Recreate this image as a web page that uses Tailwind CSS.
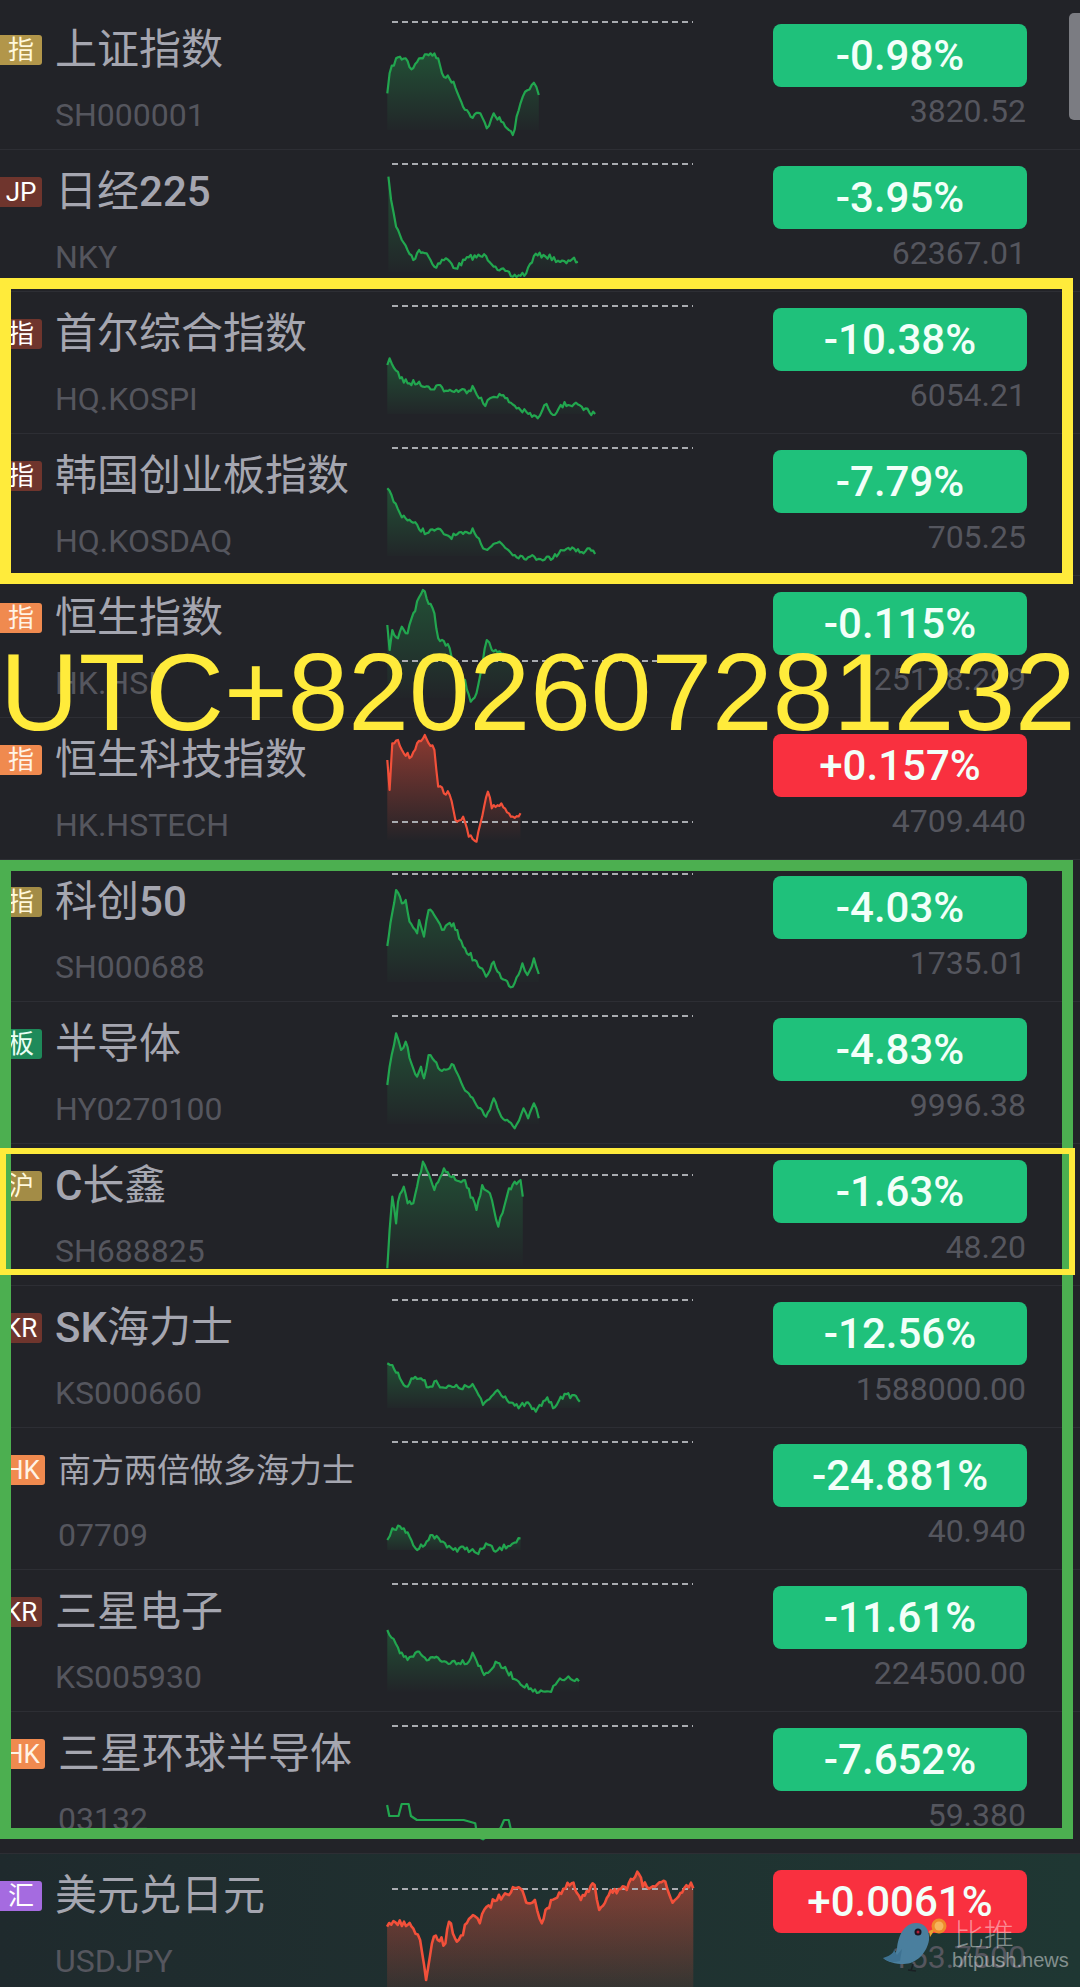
<!DOCTYPE html>
<html lang="zh-CN">
<head>
    <meta charset="UTF-8">
    <title>行情列表</title>
    <script src="https://cdn.jsdelivr.net/npm/@tailwindcss/browser@4"></script>
</head>
<body class="bg-[#222328]">
    <div class="relative w-[1080px] h-[1987px] overflow-hidden pt-[8px] bg-[#222328] font-[Roboto,'Noto_Sans_CJK_SC',sans-serif]">
        <div id="list"></div>

        <!-- scrollbar -->
        <div class="absolute left-[1069px] top-[13px] w-[11px] h-[107px] rounded-l-[5px] bg-[#7b7c82]"></div>

        <!-- annotation frames drawn on the screenshot -->
        <div class="absolute left-0 top-[278px] w-[1073px] h-[306px] border-[11px] border-[#ffeb3b]"></div>
        <div class="absolute left-0 top-[860px] w-[1073px] h-[979px] border-[11px] border-[#4caf50]"></div>
        <div class="absolute left-0 top-[1148px] w-[1075px] h-[127px] border-[6px] border-[#ffeb3b]"></div>
        <div class="absolute left-[0px] top-[630px] text-[109px] leading-[124px] whitespace-nowrap text-[#ffeb3b] font-['Liberation_Sans',sans-serif]">UTC+8202607281232</div>

        <!-- watermark -->
        <svg class="absolute left-[880px] top-[1915px]" width="70" height="60" viewBox="0 0 70 60">
            <path d="M3 43 C12 46 14 42 17 34 C18 20 25 8 36 8 C45 8 50 15 49 25 C47 38 36 49 24 49 C15 49 8 47 3 43 Z" fill="#4a7f9e"/>
            <path d="M3 43 C9 41 13 39 14 35 L17 40 L22 34 L20 46 C13 48 8 47 3 43 Z" fill="#3e7292"/>
            <circle cx="38" cy="17" r="3.5" fill="#1a1420"/>
            <circle cx="38" cy="17" r="1.5" fill="#b3203a"/>
            <path d="M49 16 L56 13 L50 22 Z" fill="#e8a030"/>
            <path d="M33 49 L31 56 M28 55 L36 56" stroke="#1a2024" stroke-width="1.5" fill="none"/>
            <circle cx="59" cy="11" r="7.5" fill="#ee8a2a"/>
            <circle cx="59" cy="11" r="4.5" fill="#f6b35c"/>
        </svg>
        <div class="absolute left-[954px] top-[1914px] text-[30px] leading-[36px] text-white/45 font-['Noto_Sans_CJK_SC',sans-serif] font-light">比推</div>
        <div class="absolute left-[952px] top-[1948px] text-[20px] leading-[24px] text-white/45 font-['Liberation_Sans',sans-serif]">bitpush.news</div>
    </div>

    <script>
        // chart points are read off zoomed crops: x = zx / sx - 386, y = zy / 3 + oy
        const rows = [
            { name: '上证指数', code: 'SH000001', tag: '指', tagCls: 'bg-[#b2964a] text-[#fff8dc]', pct: '-0.98%', price: '3820.52', dash: 14, oy: -8,
              pts: [[1012,280],[1018,220],[1035,175],[1060,175],[1075,208],[1095,175],[1125,160],[1145,175],[1155,220],[1185,245],[1205,305],[1230,350],[1255,340],[1272,385],[1290,340],[1310,365],[1340,405],[1360,310],[1372,275],[1395,248],[1408,285]] },
            { name: '日经<span class="font-medium">225</span>', code: 'NKY', tag: 'JP', tagCls: 'bg-[#6f352d] text-white', pct: '-3.95%', price: '62367.01', dash: 14, oy: -150,
              pts: [[1015,530],[1022,600],[1035,680],[1050,720],[1080,780],[1095,750],[1115,760],[1135,800],[1165,775],[1190,805],[1225,772],[1270,768],[1295,800],[1340,830],[1375,820],[1395,768],[1420,765],[1480,790],[1495,778],[1510,785]] },
            { name: '首尔综合指数', code: 'HQ.KOSPI', tag: '指', tagCls: 'bg-[#6f352d] text-white', pct: '-10.38%', price: '6054.21', dash: 14, oy: -22,
              pts: [[1012,285],[1018,265],[1045,325],[1070,340],[1095,335],[1125,358],[1145,345],[1165,362],[1225,362],[1235,348],[1268,408],[1280,385],[1305,372],[1360,420],[1405,445],[1428,402],[1445,435],[1465,405],[1500,402],[1525,420],[1555,432]] },
            { name: '韩国创业板指数', code: 'HQ.KOSDAQ', tag: '指', tagCls: 'bg-[#6f352d] text-white', pct: '-7.79%', price: '705.25', dash: 14, oy: -164,
              pts: [[1012,655],[1045,730],[1075,755],[1115,790],[1140,778],[1175,800],[1225,790],[1235,775],[1268,838],[1305,815],[1345,855],[1380,862],[1445,865],[1465,840],[1495,832],[1525,850],[1540,835],[1555,852]] },
            { name: '恒生指数', code: 'HK.HSI', tag: '指', tagCls: 'bg-[#f08a4f] text-[#fff3e6]', pct: '-0.115%', price: '25178.299', dash: 85, oy: -6,
              pts: [[1012,165],[1018,240],[1025,180],[1040,205],[1050,170],[1065,190],[1080,130],[1105,60],[1135,130],[1145,205],[1175,235],[1190,300],[1215,330],[1230,395],[1245,370],[1272,210],[1285,240],[1310,250],[1335,275],[1358,305]] },
            { name: '恒生科技指数', code: 'HK.HSTECH', tag: '指', tagCls: 'bg-[#f08a4f] text-[#fff3e6]', pct: '+0.157%', price: '4709.440', dash: 104, oy: -148, up: true,
              pts: [[1012,570],[1018,660],[1025,520],[1040,510],[1055,550],[1075,560],[1090,520],[1110,495],[1135,540],[1145,650],[1175,675],[1190,750],[1210,740],[1225,800],[1245,815],[1275,665],[1285,715],[1310,700],[1335,740],[1360,730]] },
            { name: '科创<span class="font-medium">50</span>', code: 'SH000688', tag: '指', tagCls: 'bg-[#a38c46] text-[#fff8dc]', pct: '-4.03%', price: '1735.01', dash: 14, oy: 0,
              pts: [[1012,258],[1020,190],[1035,90],[1050,130],[1060,120],[1070,185],[1090,220],[1095,180],[1108,230],[1120,150],[1140,175],[1155,210],[1185,190],[1210,260],[1240,300],[1270,350],[1290,305],[1310,355],[1340,380],[1365,310],[1378,345],[1395,295],[1408,342]] },
            { name: '半导体', code: 'HY0270100', tag: '板', tagCls: 'bg-[#1e8a5a] text-[#eafff4]', pct: '-4.83%', price: '9996.38', dash: 14, oy: -142,
              pts: [[1012,675],[1018,620],[1035,520],[1048,570],[1060,545],[1075,610],[1090,650],[1100,620],[1108,655],[1120,585],[1150,630],[1185,615],[1210,680],[1240,725],[1270,770],[1290,715],[1310,770],[1345,805],[1368,745],[1380,775],[1395,730],[1408,775]] },
            { name: '<span class="font-medium">C</span>长鑫', code: 'SH688825', tag: '沪', tagCls: 'bg-[#a38c46] text-[#fff8dc]', pct: '-1.63%', price: '48.20', dash: 31, oy: -284,
              pts: [[1012,1225],[1018,1110],[1025,1010],[1035,1090],[1040,1025],[1055,980],[1065,1030],[1080,1030],[1105,905],[1135,990],[1160,925],[1190,960],[1215,960],[1245,1050],[1260,975],[1280,1000],[1302,1100],[1330,985],[1360,960],[1366,1010]] },
            { name: '<span class="font-medium">SK</span>海力士', code: 'KS000660', tag: 'KR', tagCls: 'bg-[#6f352d] text-white', pct: '-12.56%', price: '1588000.00', dash: 14, oy: -6,
              pts: [[1012,250],[1025,255],[1045,295],[1065,320],[1075,295],[1100,295],[1120,322],[1140,302],[1155,322],[1225,322],[1235,312],[1262,375],[1300,330],[1355,385],[1375,368],[1400,395],[1430,352],[1445,385],[1465,350],[1500,345],[1515,365]] },
            { name: '南方两倍做多海力士', small: true, code: '07709', tag: 'HK', hk: true, tagCls: 'bg-[#f08a4f] text-[#fff3e6]', pct: '-24.881%', price: '40.940', dash: 14, oy: -148,
              pts: [[1012,780],[1025,745],[1055,745],[1090,810],[1130,765],[1195,815],[1210,800],[1250,822],[1270,790],[1295,815],[1360,775]] },
            { name: '三星电子', code: 'KS005930', tag: 'KR', tagCls: 'bg-[#6f352d] text-white', pct: '-11.61%', price: '224500.00', dash: 14, oy: -290,
              pts: [[1012,1050],[1045,1120],[1065,1140],[1095,1115],[1120,1140],[1140,1130],[1155,1145],[1225,1145],[1235,1118],[1265,1185],[1300,1148],[1350,1200],[1403,1239],[1440,1236],[1463,1195],[1480,1195],[1513,1204]] },
            { name: '三星环球半导体', code: '03132', tag: 'HK', hk: true, tagCls: 'bg-[#f08a4f] text-[#fff3e6]', pct: '-7.652%', price: '59.380', dash: 14, oy: -32, sx: 2.178, flat: true,
              pts: [[843,375],[848,408],[868,408],[875,372],[890,372],[895,408],[908,420],[1010,420],[1035,430],[1040,470],[1052,478],[1090,445],[1098,420],[1108,420],[1112,445]] },
            { name: '美元兑日元', code: 'USDJPY', tag: '汇', tagCls: 'bg-[#a56be0] text-white', pct: '+0.0061%', price: '153.7500', dash: 35, oy: -174, sx: 2.178, up: true, last: true,
              pts: [[843,740],[880,725],[900,745],[915,780],[928,900],[945,770],[970,790],[978,725],[995,785],[1030,705],[1045,730],[1060,680],[1100,640],[1130,622],[1150,670],[1165,660],[1180,730],[1200,660],[1245,610],[1265,660],[1295,615],[1305,690],[1330,630],[1365,630],[1388,575],[1400,620],[1445,602],[1465,668],[1490,625],[1505,608],[1510,625]] },
        ];

        let seed = 7;
        function rnd() {
            seed = (seed * 16807) % 2147483647;
            return seed / 2147483647 - 0.5;
        }

        // adds the small jagged noise of a real price line between the key points
        function linePoints(r) {
            const sx = r.sx || 2.613;
            const base = r.pts.map(p => [p[0] / sx - 386, p[1] / 3 + r.oy]);
            if (r.flat) return base;
            const out = [];
            for (let i = 0; i < base.length - 1; i++) {
                const a = base[i], b = base[i + 1];
                const steps = Math.max(1, Math.round((b[0] - a[0]) / 2));
                for (let s = 0; s < steps; s++) {
                    const t = s / steps;
                    const noise = s === 0 ? 0 : rnd() * (r.last ? 8 : 5.5);
                    out.push([a[0] + (b[0] - a[0]) * t, a[1] + (b[1] - a[1]) * t + noise]);
                }
            }
            out.push(base[base.length - 1]);
            return out;
        }

        function chart(r, i) {
            const pts = linePoints(r);
            const line = pts.map(p => p[0].toFixed(1) + ',' + p[1].toFixed(1)).join(' ');
            const floor = r.last ? 141 : 122;
            const first = pts[0][0].toFixed(1), end = pts[pts.length - 1][0].toFixed(1);
            const color = r.up ? '#f2503a' : '#22a64f';
            const top = r.up ? 0.5 : 0.34;
            const fill = r.flat ? '' : `<polygon points="${first},${floor} ${line} ${end},${floor}" fill="url(#fade${i})"/>`;
            return `<svg class="block shrink-0 overflow-visible" width="307" height="141" viewBox="0 0 307 141">
                <defs><linearGradient id="fade${i}" x1="0" y1="0" x2="0" y2="1">
                    <stop offset="0" stop-color="${color}" stop-opacity="${top}"/>
                    <stop offset="1" stop-color="${color}" stop-opacity="${r.last ? 0.08 : 0}"/>
                </linearGradient></defs>
                ${fill}
                <line x1="6" y1="${r.dash}" x2="307" y2="${r.dash}" stroke="#a9abb0" stroke-width="2" stroke-dasharray="6 4"/>
                <polyline points="${line}" fill="none" stroke="${color}" stroke-width="${r.last ? 2.6 : 2.2}" stroke-linejoin="round"/>
            </svg>`;
        }

        document.getElementById('list').innerHTML = rows.map((r, i) => {
            const badge = r.hk ? 'w-[45px] mr-[13px]' : 'w-[42px] mr-[13px]';
            const nameSize = r.small ? 'text-[33px]' : 'text-[42px]';
            const codePad = r.hk ? 'pl-[58px]' : 'pl-[55px]';
            const btn = r.up ? 'bg-[#f9303f]' : 'bg-[#1fc17b]';
            const rowBg = r.last ? 'bg-gradient-to-r from-[#1f2a2d] to-[#1f3733]' : '';
            return `<div class="flex h-[142px] border-b border-[#2d2e34] ${rowBg}">
                <div class="w-[386px] shrink-0">
                    <div class="flex items-center h-[80px]">
                        <span class="flex items-center justify-center h-[30px] mt-[4px] rounded-r-[3px] text-[26px] leading-none ${badge} ${r.tagCls}">${r.tag}</span>
                        <span class="whitespace-nowrap leading-none pt-[4px] text-[#a5a6b0] ${nameSize}">${r.name}</span>
                    </div>
                    <div class="flex items-center h-[54px] text-[32px] leading-none text-[#55565e] ${codePad}">${r.code}</div>
                </div>
                ${chart(r, i)}
                <div class="w-[254px] ml-[80px] pt-[16px] shrink-0">
                    <div class="flex items-center justify-center h-[63px] rounded-[8px] text-[42px] leading-none font-medium text-[#f2fff9] ${btn}">${r.pct}</div>
                    <div class="flex items-center justify-end h-[48px] pr-[1px] text-[32px] leading-none text-[#55565e]">${r.price}</div>
                </div>
            </div>`;
        }).join('');
    </script>
</body>
</html>
